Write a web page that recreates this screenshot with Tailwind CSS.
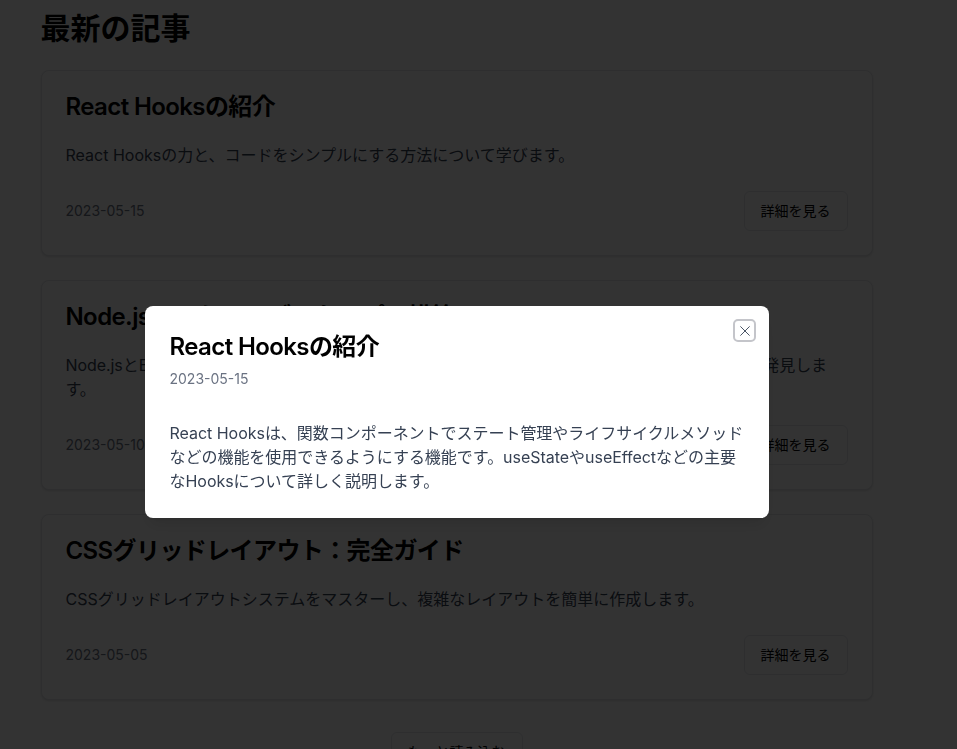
<!DOCTYPE html>
<html lang="ja">
<head>
<meta charset="utf-8">
<script src="https://cdn.jsdelivr.net/npm/@tailwindcss/browser@4"></script>
</head>
<body class="bg-white font-['Inter','Noto_Sans_CJK_JP',sans-serif] text-black h-[749px] overflow-hidden">
<main class="w-[913px] px-[40.5px] pt-[10px]">
  <h2 class="text-3xl font-bold mb-6">最新の記事</h2>
  <div class="flex flex-col gap-6">
    <article class="rounded-lg border border-gray-200 bg-white shadow-sm">
      <h3 class="p-6 pb-6 text-2xl leading-6 font-semibold tracking-tight">React Hooksの紹介</h3>
      <p class="px-6 pb-6 text-gray-700">React Hooksの力と、コードをシンプルにする方法について学びます。</p>
      <div class="flex items-center justify-between px-6 pb-6">
        <span class="text-sm text-gray-500">2023-05-15</span>
        <button class="h-10 px-4 rounded-md border border-gray-200 bg-white text-sm font-normal">詳細を見る</button>
      </div>
    </article>
    <article class="rounded-lg border border-gray-200 bg-white shadow-sm">
      <h3 class="p-6 pb-6 text-2xl leading-6 font-semibold tracking-tight">Node.jsでスケーラブルなアプリ構築</h3>
      <p class="px-6 pb-6 text-gray-700 tracking-[-0.07px]">Node.jsとExpressを使用して、堅牢でスケーラブルなAPIを構築するためのベストプラクティスを発見します。</p>
      <div class="flex items-center justify-between px-6 pb-6">
        <span class="text-sm text-gray-500">2023-05-10</span>
        <button class="h-10 px-4 rounded-md border border-gray-200 bg-white text-sm font-normal">詳細を見る</button>
      </div>
    </article>
    <article class="rounded-lg border border-gray-200 bg-white shadow-sm">
      <h3 class="p-6 pb-6 text-2xl leading-6 font-semibold tracking-tight">CSSグリッドレイアウト：完全ガイド</h3>
      <p class="px-6 pb-6 text-gray-700">CSSグリッドレイアウトシステムをマスターし、複雑なレイアウトを簡単に作成します。</p>
      <div class="flex items-center justify-between px-6 pb-6">
        <span class="text-sm text-gray-500">2023-05-05</span>
        <button class="h-10 px-4 rounded-md border border-gray-200 bg-white text-sm font-normal">詳細を見る</button>
      </div>
    </article>
  </div>
  <div class="flex justify-center mt-8">
    <button class="h-10 px-4 rounded-md border border-gray-200 bg-white text-sm font-normal">もっと読み込む</button>
  </div>
</main>
<div class="fixed inset-0 bg-black/80"></div>
<div role="dialog" class="fixed left-[144.5px] top-[306px] w-[624.5px] rounded-lg bg-white px-[25px] pt-6 pb-[25px] shadow-lg">
  <h2 class="text-2xl leading-6 font-semibold tracking-tight mt-[5px]">React Hooksの紹介</h2>
  <p class="text-sm leading-5 text-gray-500 mt-[10px]">2023-05-15</p>
  <p class="mt-[32px] text-gray-700 tracking-[-0.03px]">React Hooksは、関数コンポーネントでステート管理やライフサイクルメソッドなどの機能を使用できるようにする機能です。useStateやuseEffectなどの主要なHooksについて詳しく説明します。</p>
  <button class="absolute right-[13px] top-[13px] size-[23px] flex items-center justify-center rounded-[5px] border-2 border-[#c4c5ca] text-gray-600">
    <svg xmlns="http://www.w3.org/2000/svg" width="16" height="16" viewBox="0 0 24 24" fill="none" stroke="currentColor" stroke-width="1.5" stroke-linecap="round" stroke-linejoin="round"><path d="M18.5 5.5 5.5 18.5"/><path d="m5.5 5.5 13 13"/></svg>
  </button>
</div>
</body>
</html>
